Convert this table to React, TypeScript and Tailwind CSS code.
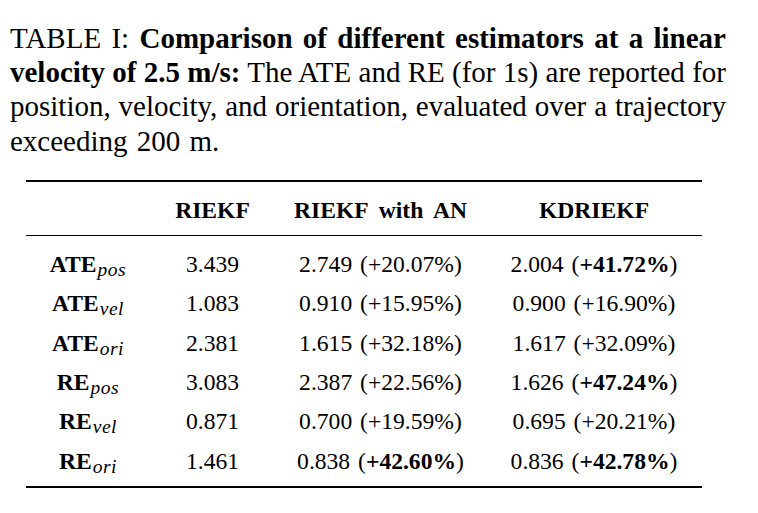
import React from 'react';

type Cell = { v: string; pct?: string; bold?: boolean };

const ROWS: { name: string; sub: string; cells: Cell[] }[] = [
  { name: 'ATE', sub: 'pos', cells: [{ v: '3.439' }, { v: '2.749', pct: '+20.07%' }, { v: '2.004', pct: '+41.72%', bold: true }] },
  { name: 'ATE', sub: 'vel', cells: [{ v: '1.083' }, { v: '0.910', pct: '+15.95%' }, { v: '0.900', pct: '+16.90%' }] },
  { name: 'ATE', sub: 'ori', cells: [{ v: '2.381' }, { v: '1.615', pct: '+32.18%' }, { v: '1.617', pct: '+32.09%' }] },
  { name: 'RE', sub: 'pos', cells: [{ v: '3.083' }, { v: '2.387', pct: '+22.56%' }, { v: '1.626', pct: '+47.24%', bold: true }] },
  { name: 'RE', sub: 'vel', cells: [{ v: '0.871' }, { v: '0.700', pct: '+19.59%' }, { v: '0.695', pct: '+20.21%' }] },
  { name: 'RE', sub: 'ori', cells: [{ v: '1.461' }, { v: '0.838', pct: '+42.60%', bold: true }, { v: '0.836', pct: '+42.78%', bold: true }] },
];

const HEADERS = ['', 'RIEKF', 'RIEKF with AN', 'KDRIEKF'];

const grid = 'grid grid-cols-[124px_125px_211px_216px] h-[39.33px] leading-[39.33px] text-center';

const CellText = ({ c }: { c: Cell }) => {
  if (!c.pct) return <span>{c.v}</span>;
  return (
    <span className="[word-spacing:2px]">
      {c.v} ({c.bold ? <b className="font-bold">{c.pct}</b> : c.pct})
    </span>
  );
};

export default function App() {
  return (
    <div className="w-[758px] h-[513px] bg-white text-black font-['Liberation_Serif',serif]">
      <div className="pt-[21px] pl-[10px] w-[726px] text-[29px] leading-[34.2px]">
        <div className="text-justify [text-align-last:justify]">
          TABLE I: <b className="font-bold">Comparison of different estimators at a linear</b>
        </div>
        <div className="text-justify [text-align-last:justify]">
          <b className="font-bold">velocity of 2.5 m/s:</b> The ATE and RE (for 1s) are reported for
        </div>
        <div className="text-justify [text-align-last:justify]">
          position, velocity, and orientation, evaluated over a trajectory
        </div>
        <div className="[word-spacing:2px]">exceeding 200 m.</div>
      </div>

      <div className="ml-[26px] mt-[22px] w-[676px] text-[23.6px]">
        <div className="h-[2px] bg-black" />
        <div className="pt-[9px] pb-[5px]">
          <div className={`${grid} font-bold [word-spacing:5px]`}>
            {HEADERS.map((h, i) => (
              <div key={i}>{h}</div>
            ))}
          </div>
        </div>
        <div className="h-px bg-black" />
        <div className="pt-[9px] pb-[5px]">
          {ROWS.map((r, i) => (
            <div key={i} className={grid}>
              <div>
                <span className="font-bold">{r.name}</span>
                <span className="italic text-[19.5px] relative top-[4px] ml-px tracking-[0.5px]">{r.sub}</span>
              </div>
              {r.cells.map((c, j) => (
                <div key={j}>
                  <CellText c={c} />
                </div>
              ))}
            </div>
          ))}
        </div>
        <div className="h-[2px] bg-black" />
      </div>
    </div>
  );
}
